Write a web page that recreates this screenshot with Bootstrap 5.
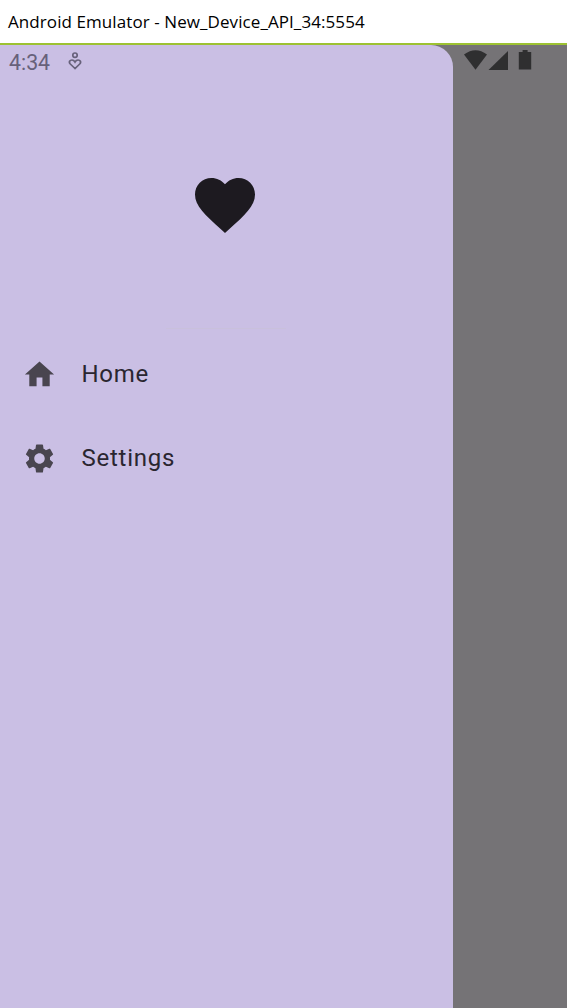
<!DOCTYPE html>
<html lang="en">
<head>
<meta charset="utf-8">
<meta name="viewport" content="width=device-width, initial-scale=1">
<title>Android Emulator</title>
<link href="https://cdn.jsdelivr.net/npm/bootstrap@5.3.0/dist/css/bootstrap.min.css" rel="stylesheet">
<style>
  body { background: #757376; font-family: Roboto, sans-serif; }
  svg { display: block; flex: none; }
  .window-title { height: 45px; padding: 0 8px 1px; border-bottom: 2px solid #9dc232; color: #000; font: 17px/1 "Open Sans", sans-serif; }
  .window-title span { letter-spacing: .08px; white-space: nowrap; }
  .drawer { width: 453px; background: #cabfe4; border-top-right-radius: 22px; color: #2a2630; }
  .status-left { height: 34px; padding-left: 9px; color: #67617a; font-size: 21.3px; line-height: 35px; gap: 18px; }
  .status-left svg { margin-top: 5px; }
  .status-right { height: 34px; padding-left: 11px; color: #2f2f30; }
  .drawer-head { height: 249px; padding-top: 90px; padding-left: 189px; color: #1d1a20; }
  .drawer-rule { width: 120px; height: 1px; margin: 0 0 3px 166px; background: #c9c0dc; }
  .drawer-item { height: 84px; padding-left: 21.5px; gap: 25px; font-size: 24px; letter-spacing: .75px; line-height: 1; }
  .drawer-item svg { color: #49454f; }
</style>
</head>
<body>
<div class="d-flex flex-column vh-100 overflow-hidden">
  <header class="window-title bg-white d-flex align-items-center"><span>Android Emulator - New_Device_API_34:5554</span></header>
  <main class="d-flex flex-grow-1">
    <nav class="drawer">
      <div class="status-left d-flex align-items-start">
        <span>4:34</span>
        <svg width="14" height="20" viewBox="0 0 14 20" fill="none" stroke="currentColor" stroke-width="1.7"><circle cx="7" cy="5.2" r="2.2"/><path d="M7 18.500 2.300 14C.4 12 1.800 10 4 10c1.400 0 2.300.8 3 2 .7-1.200 1.600-2 3-2 2.200 0 3.600 2 1.700 4Z"/></svg>
      </div>
      <div class="drawer-head">
        <svg width="72" height="72" viewBox="0 0 24 24" fill="currentColor"><path d="M12 21.350l-1.450-1.320C5.400 15.360 2 12.280 2 8.500 2 5.420 4.420 3 7.500 3c1.740 0 3.410.81 4.500 2.090C13.090 3.810 14.760 3 16.500 3 19.580 3 22 5.420 22 8.500c0 3.780-3.400 6.860-8.550 11.540L12 21.350z"/></svg>
      </div>
      <div class="drawer-rule"></div>
      <a class="drawer-item d-flex align-items-center text-reset text-decoration-none" href="#">
        <svg width="35" height="35" viewBox="0 0 24 24" fill="currentColor"><path d="M10 20v-6h4v6h5v-8h3L12 3 2 12h3v8z"/></svg>
        <span>Home</span>
      </a>
      <a class="drawer-item d-flex align-items-center text-reset text-decoration-none" href="#">
        <svg width="35" height="35" viewBox="0 0 24 24" fill="currentColor"><path d="M19.140 12.940c.04-.3.06-.61.06-.94 0-.32-.02-.64-.07-.94l2.030-1.580c.18-.14.23-.41.12-.61l-1.920-3.320c-.12-.22-.37-.29-.59-.22l-2.390.96c-.5-.38-1.030-.7-1.620-.94l-.36-2.540c-.04-.24-.24-.41-.48-.41h-3.840c-.24 0-.43.17-.47.41l-.36 2.540c-.59.24-1.130.57-1.620.94l-2.390-.96c-.22-.08-.47 0-.59.22L2.740 8.870c-.12.21-.08.47.12.61l2.030 1.580c-.05.3-.09.63-.09.94s.02.64.07.94l-2.030 1.580c-.18.14-.23.41-.12.61l1.920 3.320c.12.22.37.29.59.22l2.390-.96c.5.38 1.030.7 1.620.94l.36 2.540c.05.24.24.41.48.41h3.840c.24 0 .44-.17.47-.41l.36-2.540c.59-.24 1.130-.56 1.620-.94l2.390.96c.22.08.47 0 .59-.22l1.920-3.320c.12-.22.07-.47-.12-.61l-2.010-1.580zM12 15.600c-1.980 0-3.600-1.620-3.600-3.600s1.620-3.600 3.600-3.600 3.600 1.620 3.600 3.600-1.620 3.600-3.600 3.600z"/></svg>
        <span>Settings</span>
      </a>
    </nav>
    <div class="status-right flex-grow-1">
      <svg width="68" height="30" viewBox="0 0 68 30" fill="currentColor"><path d="M0 9.500Q11.500 1 23 9.500L11.500 24.800Z"/><path d="M44 6v19H24.500Z"/><path d="M54.800 7h3.800V5h5v2H67.200v17.400H54.800Z"/></svg>
    </div>
  </main>
</div>
<script src="https://cdn.jsdelivr.net/npm/bootstrap@5.3.0/dist/js/bootstrap.bundle.min.js"></script>
</body>
</html>
